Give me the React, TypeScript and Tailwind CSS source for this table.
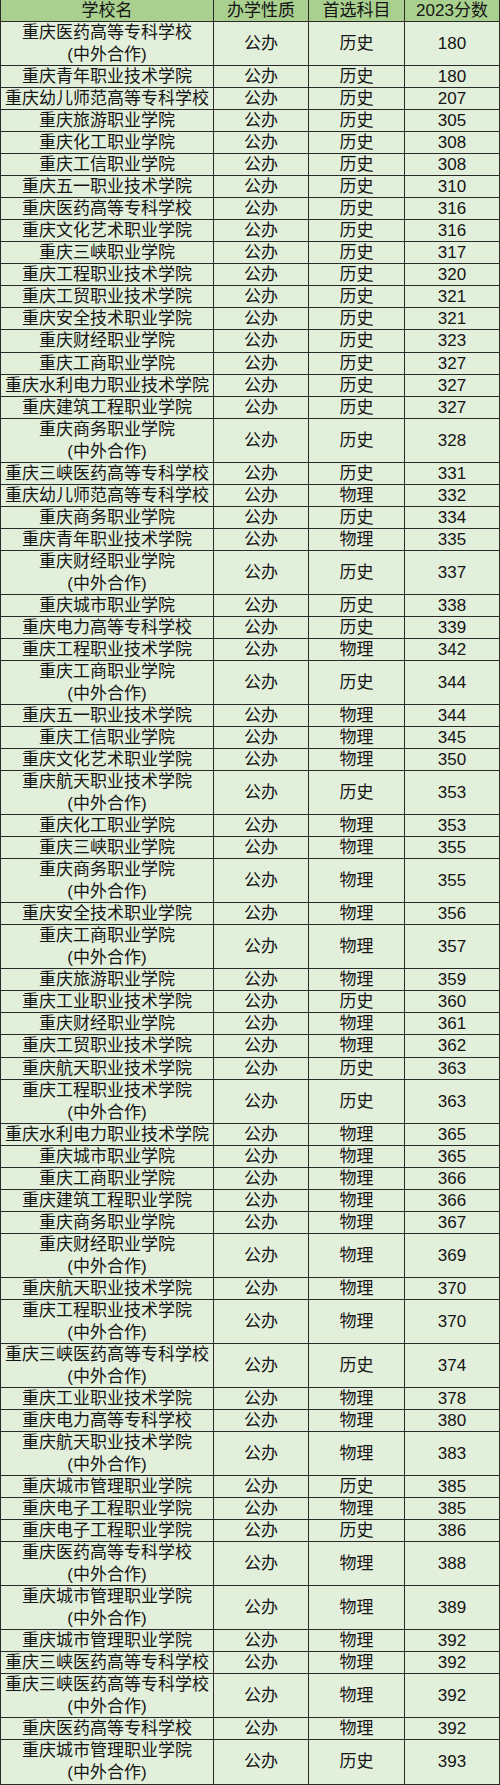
import React from "react";

type Row = [string, string, string, boolean?];

const rows: Row[] = [
  ["重庆医药高等专科学校", "历史", "180", true],
  ["重庆青年职业技术学院", "历史", "180"],
  ["重庆幼儿师范高等专科学校", "历史", "207"],
  ["重庆旅游职业学院", "历史", "305"],
  ["重庆化工职业学院", "历史", "308"],
  ["重庆工信职业学院", "历史", "308"],
  ["重庆五一职业技术学院", "历史", "310"],
  ["重庆医药高等专科学校", "历史", "316"],
  ["重庆文化艺术职业学院", "历史", "316"],
  ["重庆三峡职业学院", "历史", "317"],
  ["重庆工程职业技术学院", "历史", "320"],
  ["重庆工贸职业技术学院", "历史", "321"],
  ["重庆安全技术职业学院", "历史", "321"],
  ["重庆财经职业学院", "历史", "323"],
  ["重庆工商职业学院", "历史", "327"],
  ["重庆水利电力职业技术学院", "历史", "327"],
  ["重庆建筑工程职业学院", "历史", "327"],
  ["重庆商务职业学院", "历史", "328", true],
  ["重庆三峡医药高等专科学校", "历史", "331"],
  ["重庆幼儿师范高等专科学校", "物理", "332"],
  ["重庆商务职业学院", "历史", "334"],
  ["重庆青年职业技术学院", "物理", "335"],
  ["重庆财经职业学院", "历史", "337", true],
  ["重庆城市职业学院", "历史", "338"],
  ["重庆电力高等专科学校", "历史", "339"],
  ["重庆工程职业技术学院", "物理", "342"],
  ["重庆工商职业学院", "历史", "344", true],
  ["重庆五一职业技术学院", "物理", "344"],
  ["重庆工信职业学院", "物理", "345"],
  ["重庆文化艺术职业学院", "物理", "350"],
  ["重庆航天职业技术学院", "历史", "353", true],
  ["重庆化工职业学院", "物理", "353"],
  ["重庆三峡职业学院", "物理", "355"],
  ["重庆商务职业学院", "物理", "355", true],
  ["重庆安全技术职业学院", "物理", "356"],
  ["重庆工商职业学院", "物理", "357", true],
  ["重庆旅游职业学院", "物理", "359"],
  ["重庆工业职业技术学院", "历史", "360"],
  ["重庆财经职业学院", "物理", "361"],
  ["重庆工贸职业技术学院", "物理", "362"],
  ["重庆航天职业技术学院", "历史", "363"],
  ["重庆工程职业技术学院", "历史", "363", true],
  ["重庆水利电力职业技术学院", "物理", "365"],
  ["重庆城市职业学院", "物理", "365"],
  ["重庆工商职业学院", "物理", "366"],
  ["重庆建筑工程职业学院", "物理", "366"],
  ["重庆商务职业学院", "物理", "367"],
  ["重庆财经职业学院", "物理", "369", true],
  ["重庆航天职业技术学院", "物理", "370"],
  ["重庆工程职业技术学院", "物理", "370", true],
  ["重庆三峡医药高等专科学校", "历史", "374", true],
  ["重庆工业职业技术学院", "物理", "378"],
  ["重庆电力高等专科学校", "物理", "380"],
  ["重庆航天职业技术学院", "物理", "383", true],
  ["重庆城市管理职业学院", "历史", "385"],
  ["重庆电子工程职业学院", "物理", "385"],
  ["重庆电子工程职业学院", "历史", "386"],
  ["重庆医药高等专科学校", "物理", "388", true],
  ["重庆城市管理职业学院", "物理", "389", true],
  ["重庆城市管理职业学院", "物理", "392"],
  ["重庆三峡医药高等专科学校", "物理", "392"],
  ["重庆三峡医药高等专科学校", "物理", "392", true],
  ["重庆医药高等专科学校", "物理", "392"],
  ["重庆城市管理职业学院", "历史", "393", true],
];

const font = {
  fontFamily: '"Liberation Sans", "Noto Sans CJK SC", sans-serif',
};

export default function App() {
  return (
    <div
      className="w-[500px] bg-white text-[17px] leading-[22px] text-[#151515]"
      style={font}
    >
      <div className="border-x border-[#2a2a2a]">
        <div className="grid h-[22.04px] grid-cols-[213px_95px_96px_1fr] border-b border-[#2a2a2a] bg-[#a9d08e]">
          <div className="flex items-center justify-center border-r border-[#2a2a2a]">学校名</div>
          <div className="flex items-center justify-center border-r border-[#2a2a2a]">办学性质</div>
          <div className="flex items-center justify-center border-r border-[#2a2a2a]">首选科目</div>
          <div className="flex items-center justify-center">2023分数</div>
        </div>
        {rows.map(([name, subj, score, coop], i) => (
          <div
            key={i}
            className={
              (coop ? "h-[44.07px] " : "h-[22.04px] ") +
              "grid grid-cols-[213px_95px_96px_1fr] border-b border-[#2a2a2a] bg-[#e2efda]"
            }
          >
            <div className="flex flex-col items-center justify-center whitespace-nowrap border-r border-[#2a2a2a]">
              <span>{name}</span>
              {coop && <span>(中外合作)</span>}
            </div>
            <div className="flex items-center justify-center border-r border-[#2a2a2a]">公办</div>
            <div className="flex items-center justify-center border-r border-[#2a2a2a]">{subj}</div>
            <div className="flex items-center justify-center">{score}</div>
          </div>
        ))}
      </div>
    </div>
  );
}
